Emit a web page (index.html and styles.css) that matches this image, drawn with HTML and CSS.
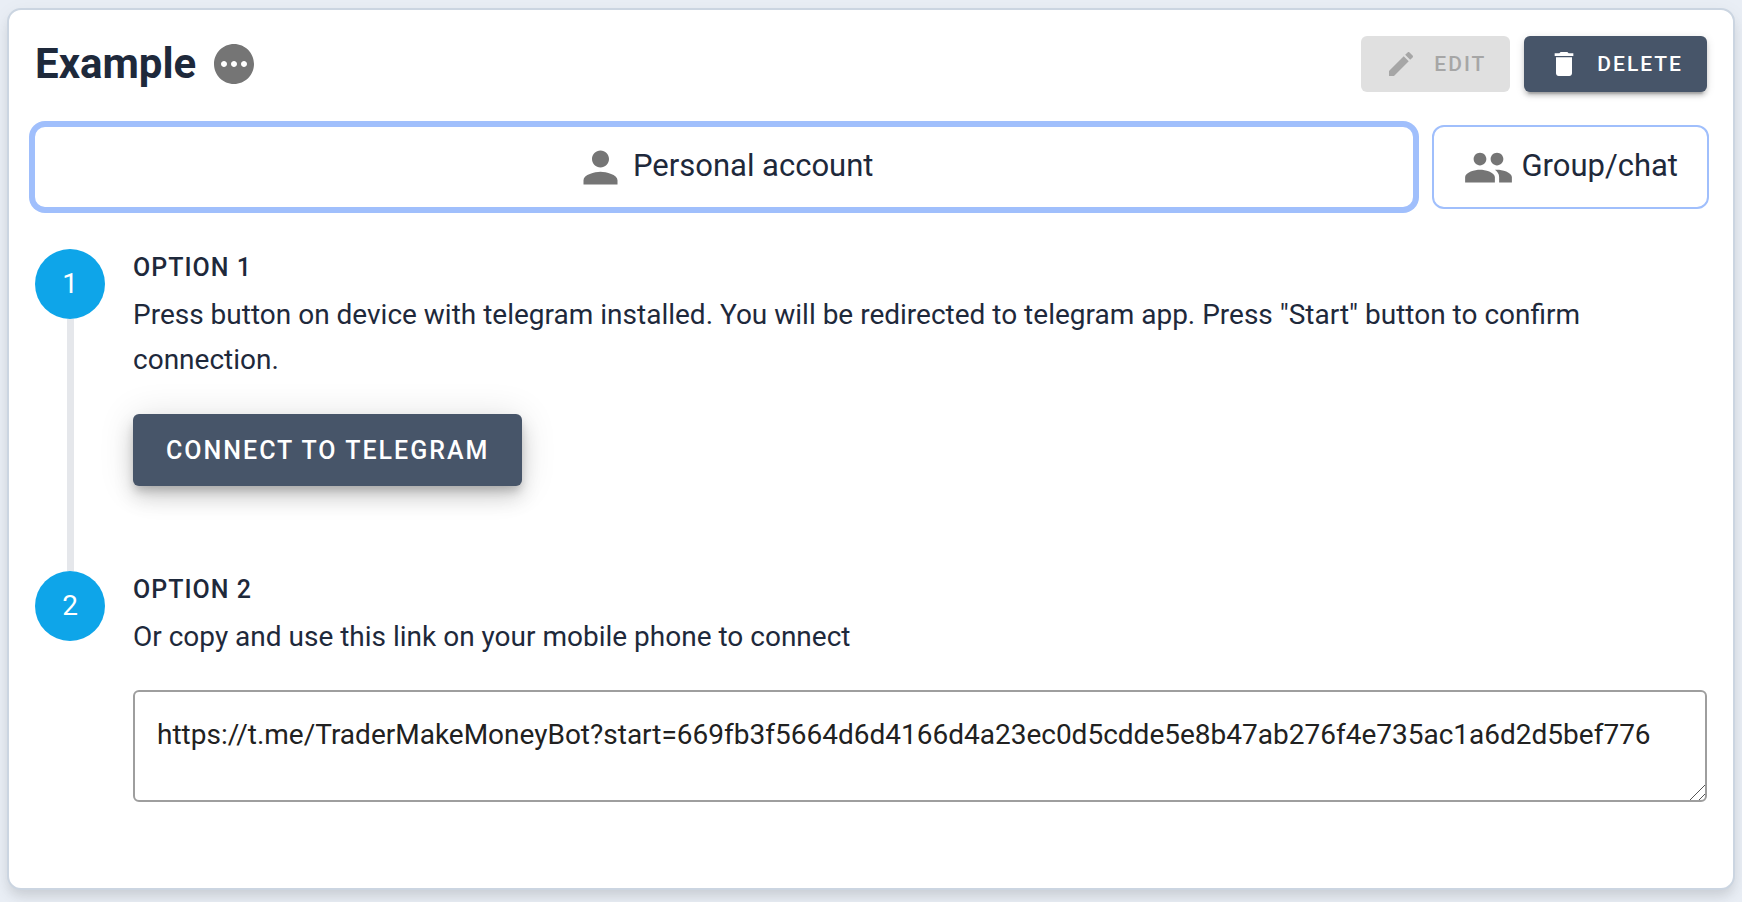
FILE: index.html
```html
<!DOCTYPE html>
<html lang="en">
<head>
<meta charset="utf-8">
<meta name="viewport" content="width=device-width, initial-scale=1">
<title>Example</title>
<link rel="stylesheet" href="styles.css">
</head>
<body>
<main class="card">
  <header class="card-header">
    <h1 class="title">Example</h1>
    <button class="more" type="button" aria-label="More">
      <svg class="more-icon" viewBox="2 2 20 20" aria-hidden="true"><path d="M12 2C6.480 2 2 6.480 2 12s4.480 10 10 10 10-4.480 10-10S17.520 2 12 2zM7 13.500c-.83 0-1.500-.67-1.500-1.500s.67-1.500 1.500-1.500 1.500.67 1.500 1.500-.67 1.500-1.500 1.500zm5 0c-.83 0-1.500-.67-1.500-1.500s.67-1.500 1.500-1.500 1.500.67 1.500 1.500-.67 1.500-1.500 1.500zm5 0c-.83 0-1.500-.67-1.500-1.500s.67-1.500 1.500-1.500 1.500.67 1.500 1.500-.67 1.500-1.500 1.500z"/></svg>
    </button>
    <div class="actions">
      <button class="button" type="button" disabled>
        <svg class="button-icon" viewBox="0 0 24 24" aria-hidden="true"><path d="M3 17.250V21h3.750L17.810 9.940l-3.750-3.750L3 17.250zM20.710 7.040c.39-.39.39-1.020 0-1.410l-2.340-2.340c-.39-.39-1.020-.39-1.410 0l-1.830 1.830 3.750 3.750 1.830-1.830z"/></svg>
        Edit
      </button>
      <button class="button" type="button">
        <svg class="button-icon" viewBox="0 0 24 24" aria-hidden="true"><path d="M6 19c0 1.100.9 2 2 2h8c1.100 0 2-.9 2-2V7H6v12zM19 4h-3.500l-1-1h-5l-1 1H5v2h14V4z"/></svg>
        Delete
      </button>
    </div>
  </header>

  <div class="tabs" role="tablist">
    <button class="tab tab-selected" type="button" role="tab" aria-selected="true">
      <svg class="tab-icon" viewBox="0 0 24 24" aria-hidden="true"><path d="M12 12c2.210 0 4-1.790 4-4s-1.790-4-4-4-4 1.790-4 4 1.790 4 4 4zm0 2c-2.670 0-8 1.340-8 4v2h16v-2c0-2.660-5.330-4-8-4z"/></svg>
      <span class="tab-label">Personal account</span>
    </button>
    <button class="tab" type="button" role="tab" aria-selected="false">
      <svg class="tab-icon" viewBox="0 0 24 24" aria-hidden="true"><path d="M16 11c1.660 0 2.990-1.340 2.990-3S17.660 5 16 5c-1.660 0-3 1.340-3 3s1.340 3 3 3zm-8 0c1.660 0 2.990-1.340 2.990-3S9.660 5 8 5C6.340 5 5 6.340 5 8s1.340 3 3 3zm0 2c-2.330 0-7 1.170-7 3.500V19h14v-2.500c0-2.330-4.670-3.500-7-3.500zm8 0c-.29 0-.62.02-.97.05 1.160.84 1.970 1.970 1.970 3.450V19h6v-2.500c0-2.330-4.670-3.500-7-3.500z"/></svg>
      <span class="tab-label">Group/chat</span>
    </button>
  </div>

  <ol class="steps">
    <li class="step">
      <div class="marker"><span class="number">1</span></div>
      <div class="step-body">
        <h2 class="step-title">Option 1</h2>
        <p class="step-text">Press button on device with telegram installed. You will be redirected to telegram app. Press "Start" button to confirm connection.</p>
        <button class="button button-large" type="button">Connect to telegram</button>
      </div>
    </li>
    <li class="step">
      <div class="marker"><span class="number">2</span></div>
      <div class="step-body">
        <h2 class="step-title">Option 2</h2>
        <p class="step-text" id="link-label">Or copy and use this link on your mobile phone to connect</p>
        <div class="field">
          <textarea class="link" aria-labelledby="link-label" rows="1" spellcheck="false" readonly>https://t.me/TraderMakeMoneyBot?start=669fb3f5664d6d4166d4a23ec0d5cdde5e8b47ab276f4e735ac1a6d2d5bef776</textarea>
          <svg class="grip" viewBox="0 0 16 16" aria-hidden="true"><path d="M1 16L16 1M10 16l6-6"/></svg>
        </div>
      </div>
    </li>
  </ol>
</main>
</body>
</html>
```
FILE: styles.css
```css
* {
  box-sizing: border-box;
}

body {
  margin: 0;
  padding: 8px 7px 12px;
  background: #e9eef5;
  color: #1e293b;
  font-family: Roboto, "Liberation Sans", sans-serif;
  font-size: 28px;
  line-height: 45px;
}

button {
  margin: 0;
  border: 0;
  font: inherit;
  color: inherit;
  cursor: pointer;
}

svg {
  display: block;
  flex: none;
  fill: currentColor;
}

.card {
  padding: 26px 26px 86px;
  border: 2px solid #cbd5e1;
  border-radius: 14px;
  background: #fff;
  box-shadow: 0 8px 12px -2px rgba(0, 0, 0, 0.1), 0 4px 20px rgba(0, 0, 0, 0.05);
}

.card-header {
  display: flex;
  align-items: center;
  gap: 18px;
}

.title {
  margin: 0;
  font-size: 42px;
  font-weight: 700;
  line-height: 56px;
}

.more {
  padding: 0;
  border-radius: 50%;
  background: none;
  color: #757575;
}

.more-icon {
  width: 40px;
  height: 40px;
}

.actions {
  display: flex;
  gap: 14px;
  margin-left: auto;
}

.button {
  display: inline-flex;
  align-items: center;
  gap: 17px;
  height: 56px;
  padding: 0 24px;
  border-radius: 6px;
  background: #475569;
  color: #fff;
  font-size: 21px;
  font-weight: 500;
  letter-spacing: 2px;
  text-transform: uppercase;
  box-shadow: 0 6px 2px -4px rgba(0, 0, 0, 0.2), 0 4px 4px rgba(0, 0, 0, 0.14), 0 2px 10px rgba(0, 0, 0, 0.12);
}

.button:disabled {
  background: #e0e0e0;
  color: #a6a6a6;
  box-shadow: none;
  cursor: default;
}

.button-icon {
  width: 32px;
  height: 32px;
}

.button-large {
  height: 72px;
  margin-top: 32px;
  padding: 0 33px;
  font-size: 25px;
  box-shadow: 0 6px 10px -2px rgba(0, 0, 0, 0.2), 0 12px 20px rgba(0, 0, 0, 0.14), 0 2px 36px rgba(0, 0, 0, 0.12);
}

.tabs {
  display: flex;
  gap: 17px;
  margin: 33px -2px 40px;
}

.tab {
  display: flex;
  align-items: center;
  justify-content: center;
  gap: 7px;
  height: 84px;
  padding: 0 29px;
  border: 2px solid #a0bffc;
  border-radius: 12px;
  background: #fff;
  font-size: 31px;
}

.tab-selected {
  flex: 1;
  box-shadow: 0 0 0 4px #a0bffc;
}

.tab-icon {
  width: 51px;
  height: 51px;
  color: #757575;
}

.tab-label {
  padding-bottom: 4px;
}

.steps {
  margin: 0;
  padding: 0;
  list-style: none;
}

.step {
  display: flex;
  gap: 28px;
}

.marker {
  display: flex;
  flex: none;
  flex-direction: column;
  align-items: center;
  width: 70px;
}

.number {
  width: 70px;
  height: 70px;
  border-radius: 50%;
  background: #0ea5e9;
  color: #fff;
  line-height: 70px;
  text-align: center;
}

.step:not(:last-child) .marker::after {
  content: "";
  flex: 1;
  width: 7px;
  background: #e5e7eb;
}

.step-body {
  flex: 1;
  min-width: 0;
}

.step:not(:last-child) .step-body {
  padding-bottom: 85px;
}

.step-title {
  margin: 0;
  font-size: 25px;
  font-weight: 500;
  line-height: 38px;
  letter-spacing: 1px;
  text-transform: uppercase;
}

.step-text {
  margin: 5px 0 0;
}

.field {
  position: relative;
  margin-top: 31px;
}

.link {
  display: block;
  width: 100%;
  height: 112px;
  padding: 20px 22px;
  border: 2px solid #9e9e9e;
  border-radius: 6px;
  outline: 0;
  background: #fff;
  color: #212121;
  font: inherit;
  overflow: hidden;
  resize: none;
}

.grip {
  position: absolute;
  right: 2px;
  bottom: 2px;
  width: 16px;
  height: 16px;
  fill: none;
  stroke: #555;
}
```
